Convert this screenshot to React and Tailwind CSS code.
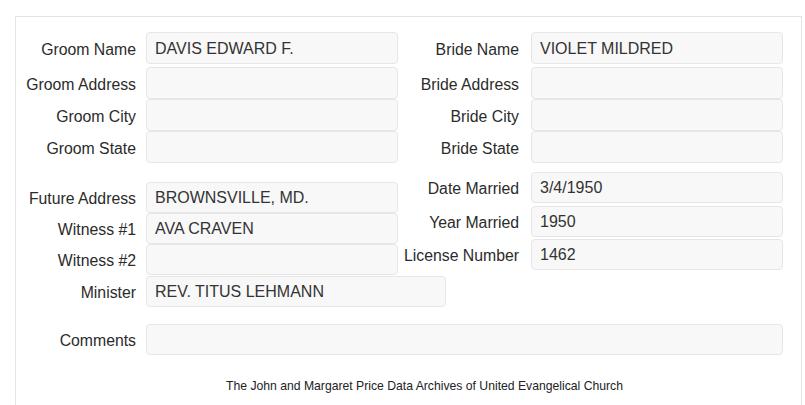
import React from "react";

const font = { fontFamily: '"Liberation Sans", Arial, sans-serif' };

function Box({ value, className = "" }) {
  return (
    <div
      className={`flex shrink-0 items-center rounded-[4px] border border-[#e6e6e6] bg-[#f8f8f8] pl-[8px] pt-[1px] text-[16px] text-[#333] ${className}`}
    >
      {value}
    </div>
  );
}

function Field({ label, value, labelW, gap, boxW = "w-[252px]", h = "h-[32px]", className = "" }) {
  return (
    <div className={`flex items-center ${className}`}>
      <div
        className={`${labelW} ${gap} shrink-0 pt-[3px] text-right text-[15.8px] leading-none text-[#2b2b2b]`}
      >
        {label}
      </div>
      <Box value={value} className={`${boxW} ${h}`} />
    </div>
  );
}

export default function App() {
  const L = { labelW: "w-[120px]", gap: "mr-[10px]" };
  const R = { labelW: "w-[121px]", gap: "mr-[12px]" };

  return (
    <div className="h-[405px] w-[805px] overflow-hidden bg-white" style={font}>
      <div className="ml-[15px] mt-[16px] h-[400px] w-[787px] border border-b-0 border-[#e3e3e3] pt-[15px]">
        {/* groom / bride */}
        <div className="flex">
          <div className="flex w-[382px] flex-col">
            <Field {...L} label="Groom Name" value="DAVIS EDWARD F." className="mb-[3px]" />
            <Field {...L} label="Groom Address" value="" />
            <Field {...L} label="Groom City" value="" />
            <Field {...L} label="Groom State" value="" />
          </div>
          <div className="flex flex-col">
            <Field {...R} label="Bride Name" value="VIOLET MILDRED" className="mb-[3px]" />
            <Field {...R} label="Bride Address" value="" />
            <Field {...R} label="Bride City" value="" />
            <Field {...R} label="Bride State" value="" />
          </div>
        </div>

        {/* marriage details */}
        <div className="flex items-start">
          <div className="mt-[19px] flex w-[382px] flex-col">
            <Field {...L} h="h-[31px]" label="Future Address" value="BROWNSVILLE, MD." />
            <Field {...L} h="h-[31px]" label="Witness #1" value="AVA CRAVEN" />
            <Field {...L} h="h-[31px]" label="Witness #2" value="" className="mb-[1px]" />
            <Field {...L} h="h-[31px]" boxW="w-[300px]" label="Minister" value="REV. TITUS LEHMANN" />
          </div>
          <div className="mt-[9px] flex flex-col">
            <Field {...R} h="h-[31px]" label="Date Married" value="3/4/1950" className="mb-[3px]" />
            <Field {...R} h="h-[31px]" label="Year Married" value="1950" className="mb-[2px]" />
            <Field {...R} h="h-[31px]" label="License Number" value="1462" />
          </div>
        </div>

        {/* comments */}
        <Field {...L} boxW="w-[637px]" h="h-[31px]" label="Comments" value="" className="mt-[17px]" />

        <p className="mt-[22px] pl-[32px] text-center text-[12.2px] text-[#222]">
          The John and Margaret Price Data Archives of United Evangelical Church
        </p>
      </div>
    </div>
  );
}
